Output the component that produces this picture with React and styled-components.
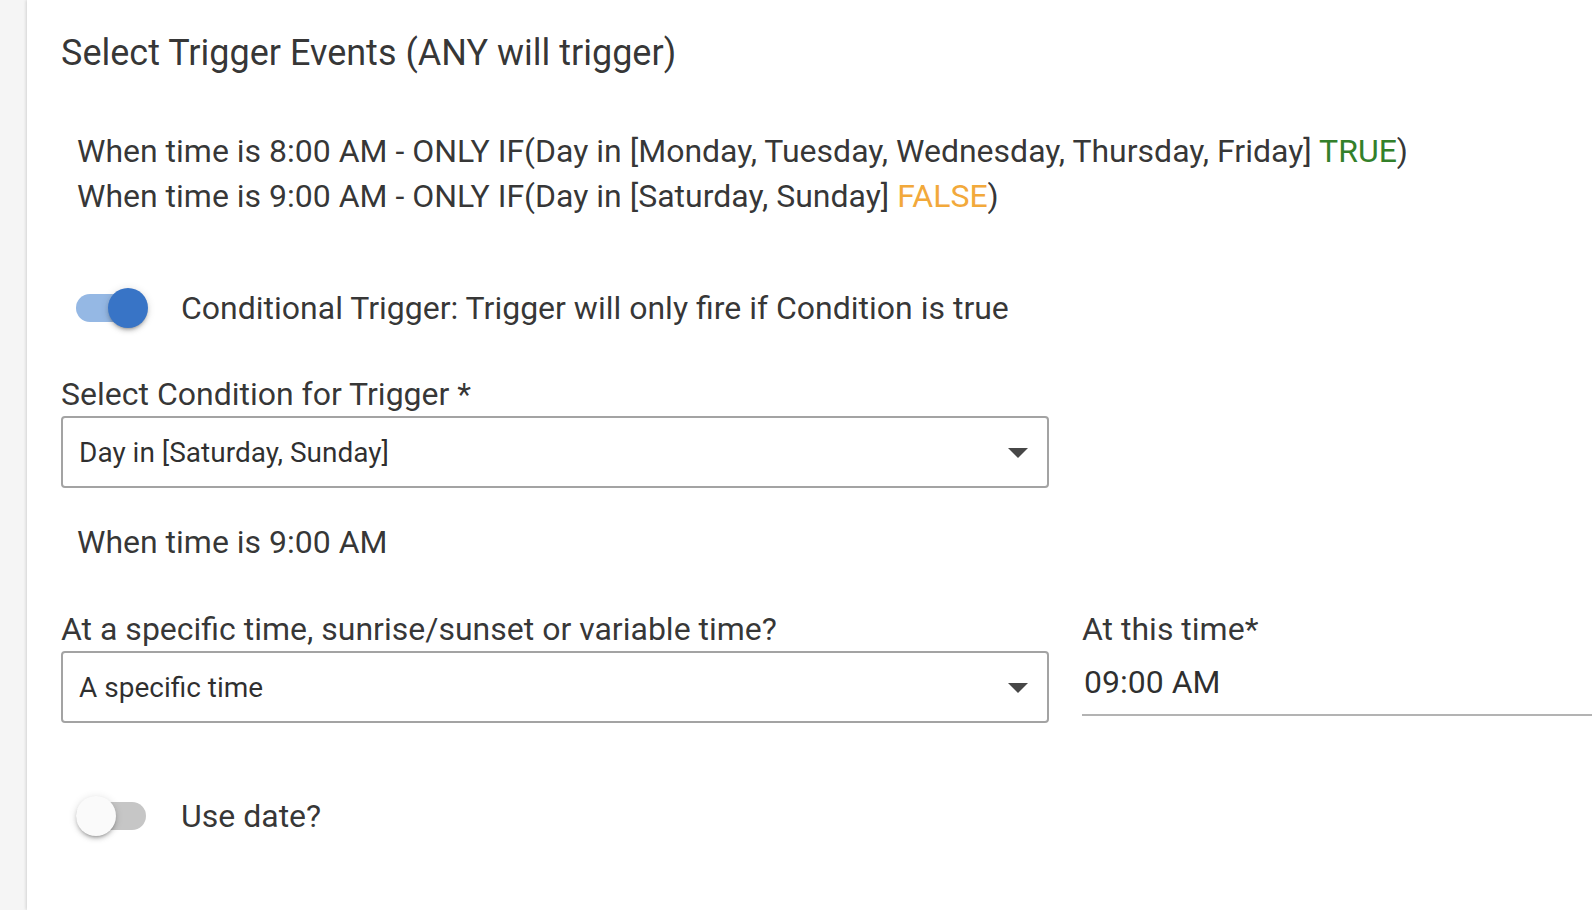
import React from "react";
import styled, { createGlobalStyle } from "styled-components";

const Global = createGlobalStyle`
  html, body { margin: 0; padding: 0; background: #ffffff; }
  body { font-family: Roboto, "Noto Sans", "Liberation Sans", sans-serif; color: rgba(0,0,0,0.8); overflow: hidden; }
`;

const Page = styled.div`
  display: flex;
  width: 1592px;
  height: 910px;
  background: #f5f5f5;
`;

const Gutter = styled.div`
  width: 27px;
  flex: none;
  background: #f5f5f5;
`;

const Panel = styled.main`
  flex: 1;
  background: #ffffff;
  box-shadow: -1px 0 3px rgba(0, 0, 0, 0.14);
  padding: 32px 0 0 34px;
  display: flex;
  flex-direction: column;
  overflow: hidden;
`;

const Title = styled.h2`
  margin: 0;
  font-size: 36px;
  font-weight: 400;
  line-height: 43px;
  color: rgba(0, 0, 0, 0.8);
`;

const Summary = styled.div`
  margin: 54px 0 0 16px;
  font-size: 32px;
  line-height: 45px;
`;

const Status = styled.span`
  color: ${(p) => (p.$ok ? "#33802a" : "#f2a93b")};
`;

const SwitchRow = styled.div`
  display: flex;
  align-items: center;
  height: 56px;
  margin-top: ${(p) => p.$mt}px;
  padding-left: 15px;
  gap: 33px;
  font-size: 32px;
`;

const Switch = styled.span`
  position: relative;
  width: 72px;
  height: 40px;
  flex: none;
  display: inline-block;
`;

const Track = styled.span`
  position: absolute;
  left: 0;
  top: 6px;
  width: 70px;
  height: 28px;
  border-radius: 14px;
  background: ${(p) => (p.$on ? "#95b8e4" : "#c6c6c6")};
`;

const Thumb = styled.span`
  position: absolute;
  top: 0;
  left: ${(p) => (p.$on ? 32 : 0)}px;
  width: 40px;
  height: 40px;
  border-radius: 50%;
  background: ${(p) => (p.$on ? "#3874c6" : "#fafafa")};
  box-shadow: 0 3px 3px -2px rgba(0,0,0,0.25), 0 3px 4px 0 rgba(0,0,0,0.14), 0 1px 8px 0 rgba(0,0,0,0.12);
`;

const FieldLabel = styled.div`
  font-size: 32px;
  line-height: 38px;
  margin-top: ${(p) => p.$mt || 0}px;
`;

const SelectBox = styled.div`
  box-sizing: border-box;
  width: 988px;
  height: 72px;
  margin-top: 3px;
  border: 2px solid #a3a3a3;
  border-radius: 4px;
  display: flex;
  align-items: center;
  justify-content: space-between;
  padding: 0 5px 0 16px;
  font-size: 28px;
  color: rgba(0, 0, 0, 0.82);
`;

const Arrow = styled.svg`
  width: 48px;
  height: 48px;
  fill: rgba(0, 0, 0, 0.72);
  flex: none;
`;

const Plain = styled.div`
  margin: 32px 0 0 16px;
  font-size: 32px;
  line-height: 45px;
`;

const FieldRow = styled.div`
  display: flex;
  gap: 33px;
  margin-top: 45px;
`;

const FieldCol = styled.div`
  display: flex;
  flex-direction: column;
  flex: ${(p) => (p.$grow ? "1" : "none")};
`;

const TimeInput = styled.div`
  box-sizing: border-box;
  height: 68px;
  padding: 1px 0 0 2px;
  display: flex;
  align-items: center;
  font-size: 32px;
  color: rgba(0, 0, 0, 0.82);
  border-bottom: 2px solid #b3b3b3;
  margin-right: -40px;
`;

const Select = ({ value }) => (
  <SelectBox>
    <span>{value}</span>
    <Arrow viewBox="0 0 24 24">
      <path d="M7 10l5 5 5-5z" />
    </Arrow>
  </SelectBox>
);

const Toggle = ({ on, label, mt }) => (
  <SwitchRow $mt={mt}>
    <Switch>
      <Track $on={on} />
      <Thumb $on={on} />
    </Switch>
    <span>{label}</span>
  </SwitchRow>
);

export default function App() {
  return (
    <>
      <Global />
      <Page>
        <Gutter />
        <Panel>
          <Title>Select Trigger Events (ANY will trigger)</Title>
          <Summary>
            <div>
              When time is 8:00 AM - ONLY IF(Day in [Monday, Tuesday, Wednesday, Thursday, Friday]{" "}
              <Status $ok>TRUE</Status>)
            </div>
            <div>
              When time is 9:00 AM - ONLY IF(Day in [Saturday, Sunday] <Status>FALSE</Status>)
            </div>
          </Summary>
          <Toggle on mt={61} label="Conditional Trigger: Trigger will only fire if Condition is true" />
          <FieldLabel $mt={39}>Select Condition for Trigger *</FieldLabel>
          <Select value="Day in [Saturday, Sunday]" />
          <Plain>When time is 9:00 AM</Plain>
          <FieldRow>
            <FieldCol>
              <FieldLabel>At a specific time, sunrise/sunset or variable time?</FieldLabel>
              <Select value="A specific time" />
            </FieldCol>
            <FieldCol $grow>
              <FieldLabel>At this time*</FieldLabel>
              <TimeInput>09:00 AM</TimeInput>
            </FieldCol>
          </FieldRow>
          <Toggle on={false} mt={65} label="Use date?" />
        </Panel>
      </Page>
    </>
  );
}
